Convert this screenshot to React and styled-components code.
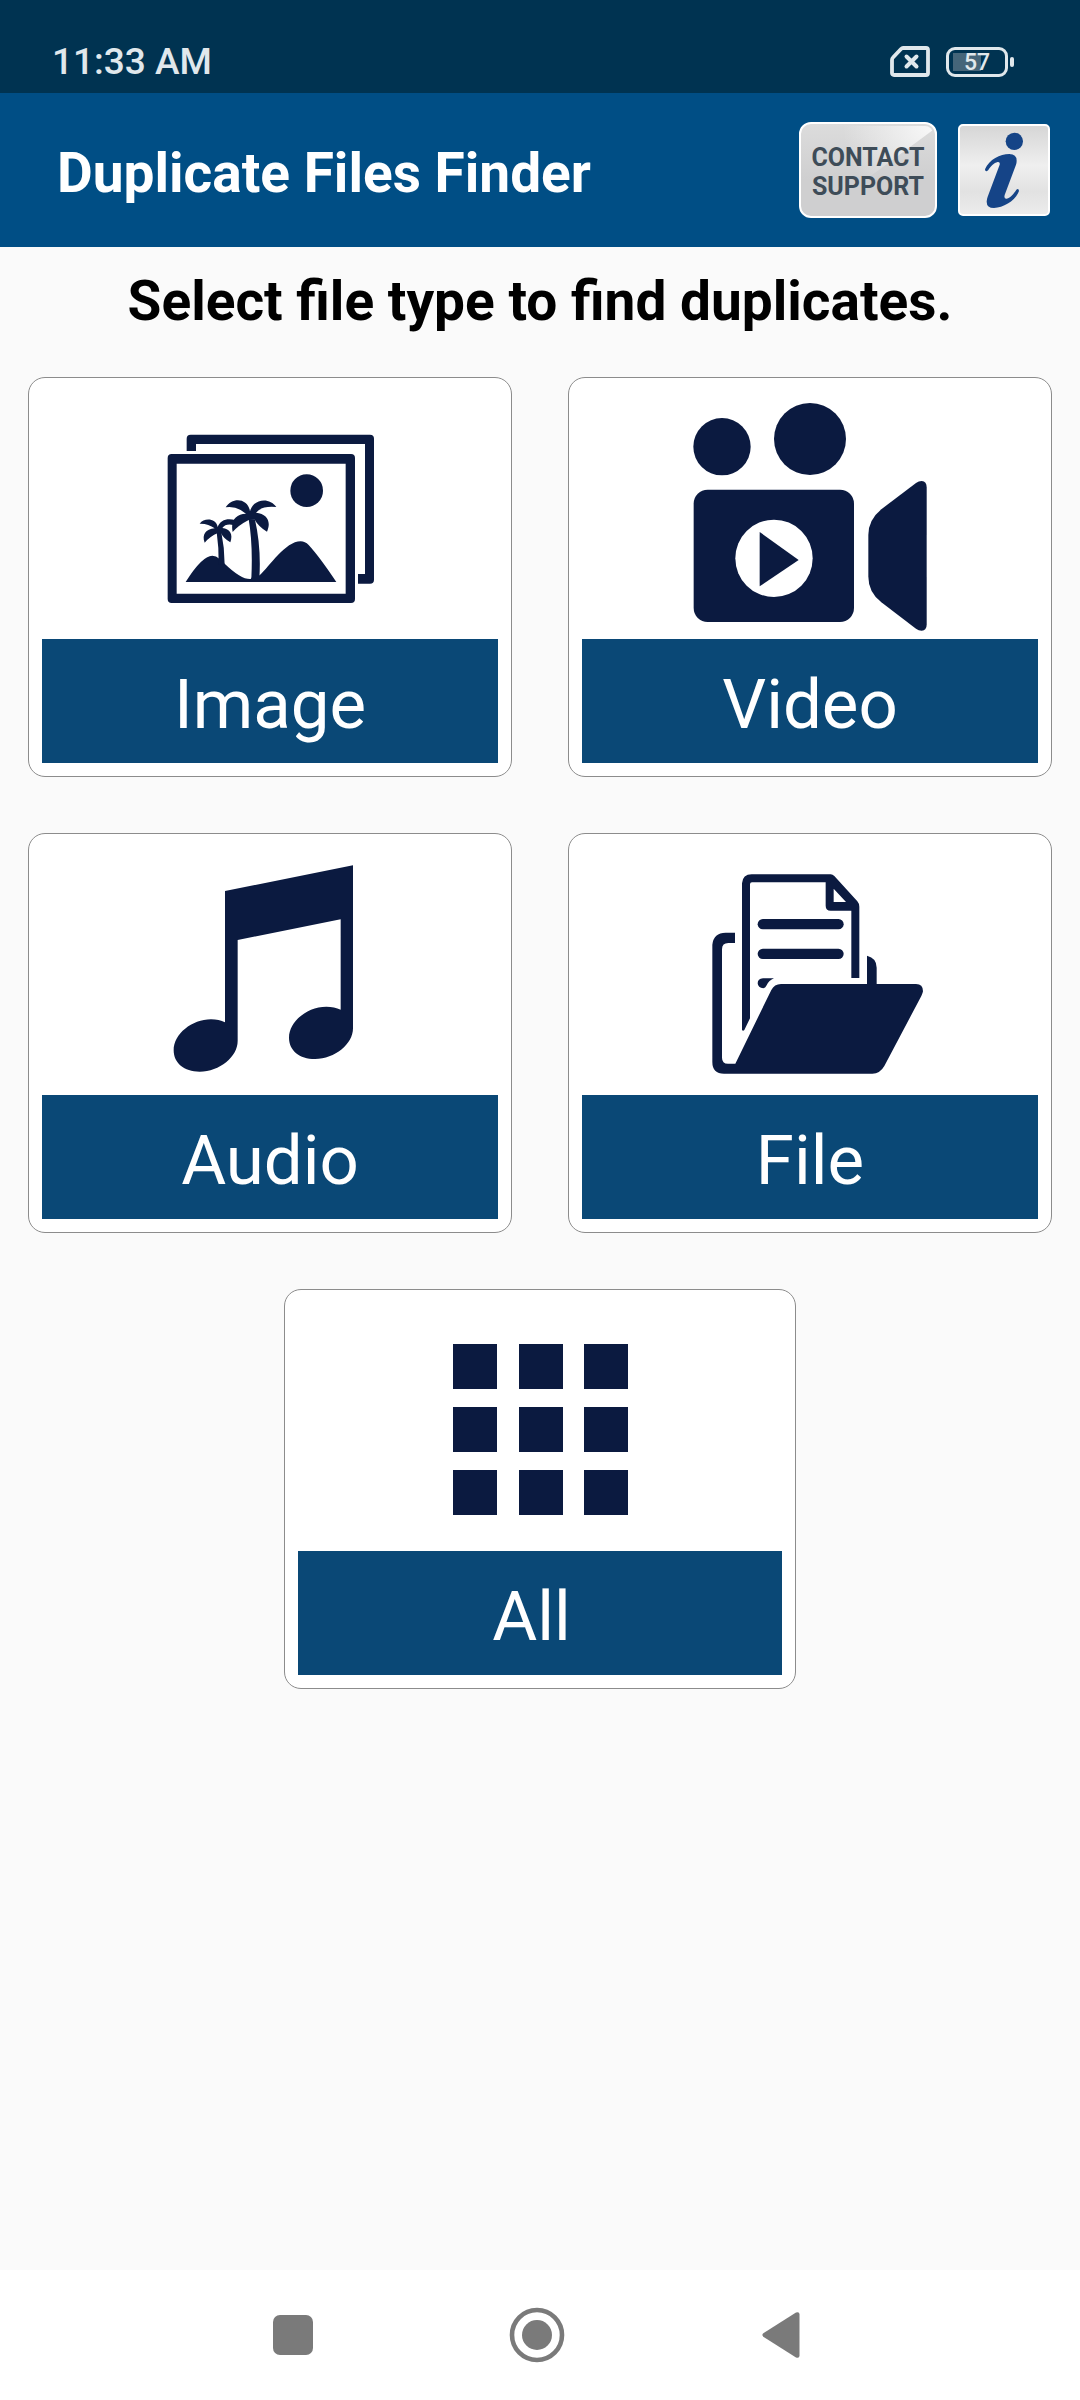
import styled, { createGlobalStyle } from "styled-components"

const ink = '#0b1a40';

const categories = [
    { name: 'Image', Icon: ImageIcon },
    { name: 'Video', Icon: VideoIcon },
    { name: 'Audio', Icon: AudioIcon },
    { name: 'File', Icon: FileIcon },
    { name: 'All ', Icon: AllIcon, wide: true },
];

export default function App() {
    return (
        <Page>
            <GlobalStyle />
            <StatusBar>
                <span>11:33 AM</span>
                <StatusIcons>
                    <SimIcon />
                    <Battery>57</Battery>
                </StatusIcons>
            </StatusBar>
            <AppBar>
                <Title>Duplicate Files Finder</Title>
                <Actions>
                    <SupportButton><span>CONTACT SUPPORT</span></SupportButton>
                    <InfoButton aria-label="Information"><InfoIcon /></InfoButton>
                </Actions>
            </AppBar>
            <Main>
                <Heading>Select file type to find duplicates.</Heading>
                <Cards>
                    {categories.map(({ name, Icon, wide }) => (
                        <Card key={name} $wide={wide}>
                            <Icon />
                            <Label>{name}</Label>
                        </Card>
                    ))}
                </Cards>
            </Main>
            <NavBar>
                <NavButton aria-label="Recents">
                    <svg width="56" height="56" viewBox="0 0 56 56" fill="#7a7a7a">
                        <rect x="8" y="8" width="40" height="40" rx="7" />
                    </svg>
                </NavButton>
                <NavButton aria-label="Home">
                    <svg width="56" height="56" viewBox="0 0 56 56" fill="#7a7a7a">
                        <circle cx="28" cy="28" r="25" fill="none" stroke="#7a7a7a" strokeWidth="4.6" />
                        <circle cx="28" cy="28" r="15" />
                    </svg>
                </NavButton>
                <NavButton aria-label="Back">
                    <svg width="56" height="56" viewBox="0 0 56 56" fill="#7a7a7a">
                        <path d="M10.3 26.3 L43 5.5 Q46.5 4.3 46.5 7.5 V48.5 Q46.5 51.7 43 50.5 L10.3 29.7 Q8.5 28 10.3 26.3 Z" />
                    </svg>
                </NavButton>
            </NavBar>
        </Page>
    )
}

function SimIcon() {
    return (
        <svg width="40" height="32" viewBox="0 0 40 32" fill="none" stroke="#e0e8ec">
            <path d="M13 2 H36 Q38 2 38 4 V27 Q38 29 36 29 H4 Q2 29 2 27 V14 Q2 12.5 3 11.5 L11 3 Q12 2 13 2 Z" strokeWidth="3.8" />
            <path d="M16.500 10.5 L26.5 20.5 M26.5 10.5 L16.500 20.5" strokeWidth="4" strokeLinecap="round" />
        </svg>
    )
}

function InfoIcon() {
    return (
        <svg viewBox="540 378 264 264" fill="#154487">
            <circle cx="703" cy="424" r="26" />
            <path d="M615 508 C628 478 660 462 688 462 Q710 462 710 482 Q710 488 708 494 L674 585 Q671 597 680 596 C692 593 702 580 709 569 Q716 563 717 573 C708 600 672 624 642 624 Q620 624 620 605 Q620 598 623 590 L659 494 Q661 485 653 486 C642 488 631 500 625 510 Q616 518 615 508 Z" />
        </svg>
    )
}

function ImageIcon() {
    return (
        <Picture viewBox="390 63 720 744">
            <path d="M500 243 V206 Q500 194 512 194 H1050 Q1062 194 1062 206 V629 Q1062 641 1050 641 H1014 V612 H1035 V222 H528 V243 Z" />
            <path fillRule="evenodd" d="M455 252 H993 Q1005 252 1005 264 V687 Q1005 699 993 699 H455 Q443 699 443 687 V264 Q443 252 455 252 Z M470 281 V671 H977 V281 Z" />
            <circle cx="860" cy="362" r="49" />
            {/* hills */}
            <path d="M497 636 Q546 557 577 557 Q588 557 599 567 L614 581 Q664 629 692 627 L697 620 L719 616 C748 590 796 514 842 514 Q855 514 866 525 Q899 561 949 636 Z" />
            {/* tall palm */}
            <path d="M686 448 Q699 522 694 627 H718 Q724 532 705 449 Z" />
            <path d="M690 424 C684 384 637 380 617 412 Q650 407 678 431 C647 432 631 452 638 486 Q655 466 686 450 L704 449 Q716 470 741 485 C754 456 743 432 708 428 Q724 407 769 411 C748 380 700 386 690 424 Z" />
            {/* short palm */}
            <path d="M590 486 Q597 535 596 582 L614 584 Q614 535 604 487 Z" />
            <path d="M593 471 C588 444 552 443 539 461 Q565 460 584 475 C557 478 545 494 554 518 Q570 499 594 489 L603 490 Q612 507 631 517 C640 493 630 477 607 474 Q617 460 640 465 L645 450 C622 443 600 450 593 471 Z" />
        </Picture>
    )
}

function VideoIcon() {
    return (
        <Picture viewBox="390 63 720 744">
            <circle cx="486" cy="230" r="86" />
            <circle cx="750" cy="207" r="108" />
            <rect x="401" y="359" width="481" height="397" rx="42" />
            <circle cx="642" cy="565" r="116" fill="#fff" />
            <path d="M599 486 L716 570 L599 649 Z" />
            <path d="M1068 339 Q1076 333 1085 333 Q1100 334 1100 352 V764 Q1100 781 1085 782 Q1076 782 1068 776 L964 697 Q925 666 925 620 V495 Q925 450 964 418 Z" />
        </Picture>
    )
}

function AudioIcon() {
    return (
        <Picture viewBox="390 81 720 744">
            <path d="M615 213 L999 136 V625 C999 672 945 717 885 717 C838 717 807 691 807 653 C807 604 862 560 919 560 Q943 560 962 569 V298 L653 360 V663 C653 710 599 755 539 755 C492 755 461 729 461 691 C461 642 516 598 573 598 Q597 598 615 607 Z" />
        </Picture>
    )
}

function FileIcon() {
    return (
        <Picture viewBox="390 81 720 744">
            <path d="M525 338 V369 H505 Q486 369 486 388 V713 Q486 731 504 731 H526 L634 510 Q643 492 663 492 H921 V407 Q950 414 950 443 V492 H1068 Q1089 492 1089 514 Q1088 520 1084 528 L973 738 Q960 761 937 761 H492 Q457 761 457 726 V374 Q461 338 497 338 Z" />
            <path fillRule="evenodd" d="M546 632 V190 Q548 163 575 163 H812 Q818 163 823 168 L892 244 Q898 251 898 260 V474 H874 V272 H812 Q797 272 797 257 V187 H576 Q570 187 570 193 V595 L553 630 Q549 635 546 630 Z M821 206 V246 H858 Z" />
            <rect x="593" y="297" width="258" height="31" rx="15.5" />
            <rect x="593" y="386" width="258" height="31" rx="15.5" />
            <path d="M642 475 H609 Q593 477 593 490 Q594 504 610 505 Q616 504 619 497 Q627 481 642 475 Z" />
        </Picture>
    )
}

function AllIcon() {
    return (
        <Picture viewBox="0 0 240 248">
            {[41, 104, 167].map((y) => [33, 99, 164].map((x) => (
                <rect key={`${x}-${y}`} x={x} y={y} width="44" height="45" />
            )))}
        </Picture>
    )
}

const GlobalStyle = createGlobalStyle`
    * {
        box-sizing: border-box;
    }

    body {
        margin: 0;
        background: #fafafa;
        font-family: Roboto, sans-serif;
    }

    button {
        font-family: inherit;
        cursor: pointer;
    }
`;

const Page = styled.div`
    min-height: 100vh;
    display: flex;
    flex-direction: column;
`;

const StatusBar = styled.div`
    display: flex;
    justify-content: space-between;
    align-items: center;
    height: 93px;
    padding: 30px 65px 0 52px;
    background: #003351;
    color: #e0e8ec;
    font-size: 37px;
    font-weight: 500;
`;

const StatusIcons = styled.div`
    display: flex;
    align-items: center;
    gap: 16px;
`;

const Battery = styled.div`
    position: relative;
    width: 62px;
    height: 30px;
    margin-right: 7px;
    border: 3px solid #e0e8ec;
    border-radius: 9px;
    background: linear-gradient(#456579, #456579) 4px 3px / 28px 18px no-repeat;
    font-size: 23px;
    line-height: 26px;
    text-align: center;

    &::after {
        content: '';
        position: absolute;
        top: 7px;
        right: -9px;
        width: 4px;
        height: 10px;
        border-radius: 2px;
        background: #e0e8ec;
    }
`;

const AppBar = styled.header`
    display: flex;
    justify-content: space-between;
    align-items: center;
    height: 154px;
    padding: 0 30px 0 57px;
    background: #004e85;
`;

const Title = styled.h1`
    margin: 0;
    padding-top: 5px;
    color: #fff;
    font-size: 55px;
    font-weight: 700;
`;

const Actions = styled.div`
    display: flex;
    align-items: center;
    gap: 21px;
`;

const SupportButton = styled.button`
    position: relative;
    width: 138px;
    height: 96px;
    padding: 3px 0 0;
    border: 2px solid #fff;
    border-radius: 12px;
    background: linear-gradient(#dcdcdc, #cfcfd0 60%);
    color: #3e4c58;
    font-size: 25px;
    font-weight: 700;
    line-height: 29px;

    /* glare in the upper right corner */
    &::before {
        content: '';
        position: absolute;
        inset: 2px;
        border-radius: 8px;
        background: radial-gradient(circle at 100% 0, #f8f8f8, rgba(248, 248, 248, 0) 90px);
        clip-path: polygon(0 0, 100% 0, 100% 4px, 40% 70%, 0 70%);
    }

    span {
        position: relative;
    }
`;

const InfoButton = styled.button`
    display: flex;
    width: 92px;
    height: 92px;
    padding: 0;
    border: 2px solid #fff;
    border-radius: 5px;
    background: linear-gradient(#d6d6d6, #efefef 45%, #e2e2e2 75%, #ececec);
`;

const Main = styled.main`
    flex: 1;
    padding: 21px 28px 28px;
`;

const Heading = styled.h2`
    margin: 0 0 43px;
    color: #000;
    font-size: 55px;
    font-weight: 700;
    line-height: 66px;
    text-align: center;
`;

const Cards = styled.div`
    display: flex;
    flex-wrap: wrap;
    justify-content: center;
    gap: 56px;
`;

const Card = styled.button`
    display: flex;
    flex-direction: column;
    align-items: center;
    width: ${({ $wide }) => $wide ? '50%' : 'calc(50% - 28px)'};
    padding: 13px;
    border: 1px solid #8c8c8c;
    border-radius: 17px;
    background: #fff;
`;

const Picture = styled.svg`
    width: 240px;
    height: 248px;
    fill: ${ink};
`;

const Label = styled.span`
    width: 100%;
    padding-top: 7px;
    background: #0a4876;
    color: #fff;
    font-size: 69px;
    line-height: 117px;
    white-space: pre;
`;

const NavBar = styled.nav`
    display: flex;
    justify-content: center;
    align-items: center;
    gap: 188px;
    height: 130px;
    padding-right: 6px;
    background: #fff;
`;

const NavButton = styled.button`
    display: flex;
    padding: 0;
    border: none;
    background: none;
`;
